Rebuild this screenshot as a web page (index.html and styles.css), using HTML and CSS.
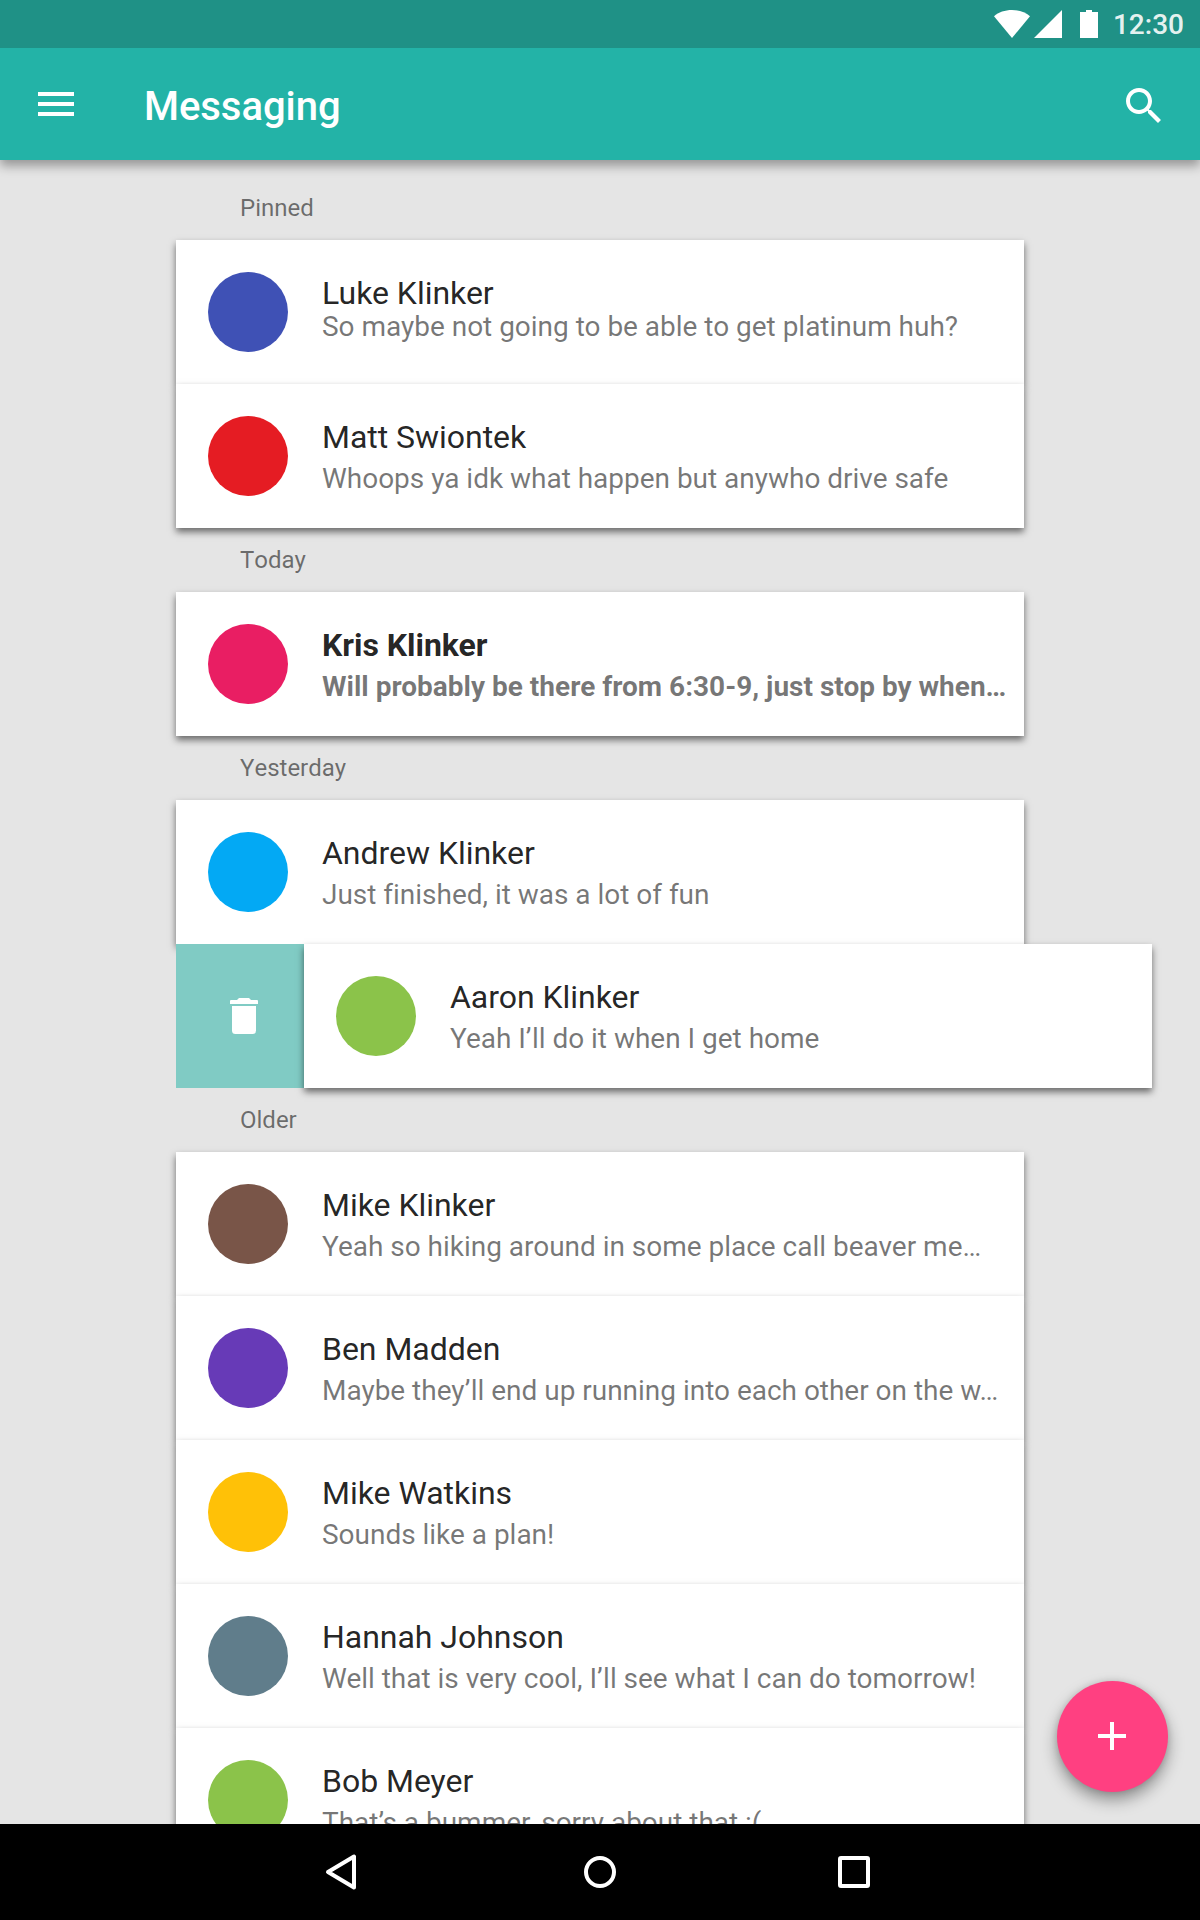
FILE: index.html
```html
<!DOCTYPE html>
<html lang="en">
<head>
<meta charset="utf-8">
<title>Messaging</title>
<link rel="stylesheet" href="styles.css">
</head>
<body>
<div class="screen">
  <header class="top">
    <div class="status-bar">
      <svg class="status-icons" width="104" height="28" viewBox="0 0 104 28" fill="#fff">
        <path d="M0 6.200C4.500 2.200 11 0 18 0s13.500 2.200 18 6.200L18 28z"/>
        <path d="M68 0v28H40z"/>
        <path d="M86 2h6V0h6v2h6v26H86z"/>
      </svg>
      <span class="clock">12:30</span>
    </div>
    <div class="app-bar">
      <svg class="menu-icon" width="36" height="24" viewBox="0 0 36 24" fill="#fff"><path d="M0 0h36v4H0zM0 10h36v4H0zM0 20h36v4H0z"/></svg>
      <h1 class="title">Messaging</h1>
      <svg class="search-icon" width="48" height="48" viewBox="0 0 24 24" fill="#fff"><path d="M15.500 14h-.790l-.280-.270C15.410 12.590 16 11.110 16 9.500 16 5.910 13.090 3 9.500 3S3 5.910 3 9.500 5.910 16 9.500 16c1.610 0 3.090-.590 4.230-1.570l.270.280v.790l5 4.990L20.490 19l-4.990-5zm-6 0C7.010 14 5 11.990 5 9.500S7.010 5 9.500 5 14 7.010 14 9.500 11.990 14 9.500 14z"/></svg>
    </div>
  </header>

  <main class="list">
    <h2 class="label">Pinned</h2>
    <article class="row row-tight"><span class="avatar indigo"></span><div class="text"><p class="name">Luke Klinker</p><p class="msg">So maybe not going to be able to get platinum huh?</p></div></article>
    <article class="row"><span class="avatar red"></span><div class="text"><p class="name">Matt Swiontek</p><p class="msg">Whoops ya idk what happen but anywho drive safe</p></div></article>

    <h2 class="label">Today</h2>
    <article class="row unread"><span class="avatar pink"></span><div class="text"><p class="name">Kris Klinker</p><p class="msg">Will probably be there from 6:30-9, just stop by when…</p></div></article>

    <h2 class="label">Yesterday</h2>
    <article class="row"><span class="avatar blue"></span><div class="text"><p class="name">Andrew Klinker</p><p class="msg">Just finished, it was a lot of fun</p></div></article>
    <div class="swipe">
      <div class="delete"><svg width="28" height="36" viewBox="0 0 28 36" fill="#fff"><path d="M2 8h24v24.500a3.500 3.500 0 0 1-3.500 3.500h-17A3.500 3.500 0 0 1 2 32.500zM1 2h6l2-2h10l2 2h6a1 1 0 0 1 1 1v3H0V3a1 1 0 0 1 1-1z"/></svg></div>
      <article class="row"><span class="avatar green"></span><div class="text"><p class="name">Aaron Klinker</p><p class="msg">Yeah I’ll do it when I get home</p></div></article>
    </div>

    <h2 class="label">Older</h2>
    <article class="row"><span class="avatar brown"></span><div class="text"><p class="name">Mike Klinker</p><p class="msg">Yeah so hiking around in some place call beaver me…</p></div></article>
    <article class="row"><span class="avatar purple"></span><div class="text"><p class="name">Ben Madden</p><p class="msg">Maybe they’ll end up running into each other on the w…</p></div></article>
    <article class="row"><span class="avatar amber"></span><div class="text"><p class="name">Mike Watkins</p><p class="msg">Sounds like a plan!</p></div></article>
    <article class="row"><span class="avatar slate"></span><div class="text"><p class="name">Hannah Johnson</p><p class="msg">Well that is very cool, I’ll see what I can do tomorrow!</p></div></article>
    <article class="row"><span class="avatar green"></span><div class="text"><p class="name">Bob Meyer</p><p class="msg">That’s a bummer, sorry about that :(</p></div></article>
  </main>

  <button class="fab" aria-label="New message"><svg width="28" height="28" viewBox="0 0 28 28" fill="#fff"><path d="M12 0h4v12h12v4H16v12h-4V16H0v-4h12z"/></svg></button>

  <nav class="nav-bar">
    <svg width="48" height="48" viewBox="0 0 48 48"><path d="M32 8.500v31L6 24z"/></svg>
    <svg width="48" height="48" viewBox="0 0 48 48"><circle cx="24" cy="24" r="14"/></svg>
    <svg width="48" height="48" viewBox="0 0 48 48"><rect x="10" y="10" width="28" height="28" rx="1"/></svg>
  </nav>
</div>
</body>
</html>
```
FILE: styles.css
```css
* { box-sizing: border-box; margin: 0; padding: 0; }

body {
  width: 1200px;
  height: 1920px;
  overflow: hidden;
  background: #e5e5e5;
  font-family: Roboto, "Liberation Sans", sans-serif;
}

.screen {
  position: relative;
  display: flex;
  flex-direction: column;
  height: 1920px;
}

.top {
  position: relative;
  z-index: 1;
  box-shadow: 0 6px 10px rgba(0, 0, 0, .34);
}

.status-bar {
  display: flex;
  align-items: center;
  justify-content: flex-end;
  height: 48px;
  padding-right: 16px;
  background: #1f9186;
}

.clock {
  width: 86px;
  padding-top: 1px;
  color: rgba(255, 255, 255, .9);
  font-size: 28px;
  font-weight: 500;
  line-height: 47px;
  text-align: right;
}

.app-bar {
  display: flex;
  align-items: center;
  height: 112px;
  padding: 0 32px 0 38px;
  background: #23b3a7;
}

.title {
  margin: 6px auto 0 70px;
  color: #fff;
  font-size: 40px;
  font-weight: 500;
  letter-spacing: -.04px;
  line-height: 48px;
}

.search-icon { margin-top: 4px; }

.list {
  flex: 1;
  min-height: 0;
  padding: 16px 176px 0;
  overflow: hidden;
}

.label {
  height: 64px;
  padding-left: 64px;
  color: rgba(0, 0, 0, .54);
  font-size: 24px;
  font-weight: 400;
  font-kerning: none;
  line-height: 64px;
}

.row {
  display: flex;
  gap: 32px;
  width: 848px;
  height: 144px;
  padding: 32px 16px 32px 32px;
  background: #fff;
  box-shadow: 0 4px 7px rgba(0, 0, 0, .54);
}

.avatar {
  flex: none;
  width: 80px;
  height: 80px;
  border-radius: 50%;
}

.indigo { background: #3f51b5; }
.red { background: #e51c23; }
.pink { background: #e91e63; }
.blue { background: #03a9f4; }
.green { background: #8bc34a; }
.brown { background: #795548; }
.purple { background: #673ab7; }
.amber { background: #ffc107; }
.slate { background: #607d8b; }

.text {
  display: flex;
  flex-direction: column;
  gap: 2px;
  padding-top: 1px;
  padding-left: 2px;
  white-space: nowrap;
}

.name {
  color: rgba(0, 0, 0, .87);
  font-size: 32px;
  letter-spacing: -.03px;
  line-height: 40px;
}

.msg {
  color: rgba(0, 0, 0, .54);
  font-size: 28px;
  letter-spacing: -.02px;
  line-height: 40px;
}

.row-tight .msg { line-height: 24px; }

.unread .name,
.unread .msg { font-weight: 700; }

.unread .msg { letter-spacing: 0; }

.swipe { display: flex; width: 976px; }

.delete {
  display: flex;
  flex: none;
  align-items: center;
  justify-content: center;
  width: 128px;
  padding-left: 8px;
  background: #80cbc4;
}

.swipe .row { flex: none; }

.fab {
  position: absolute;
  z-index: 1;
  right: 32.5px;
  bottom: 128.5px;
  display: flex;
  align-items: center;
  justify-content: center;
  width: 111px;
  height: 111px;
  border: 0;
  border-radius: 50%;
  background: #ff4081;
  box-shadow: 0 8px 16px rgba(0, 0, 0, .38), 0 0 6px rgba(0, 0, 0, .12);
}

.nav-bar {
  position: relative;
  z-index: 2;
  display: flex;
  align-items: center;
  justify-content: center;
  gap: 206px;
  height: 96px;
  background: #000;
}

.nav-bar svg { fill: none; stroke: #fff; stroke-width: 4; stroke-linejoin: round; }
```
